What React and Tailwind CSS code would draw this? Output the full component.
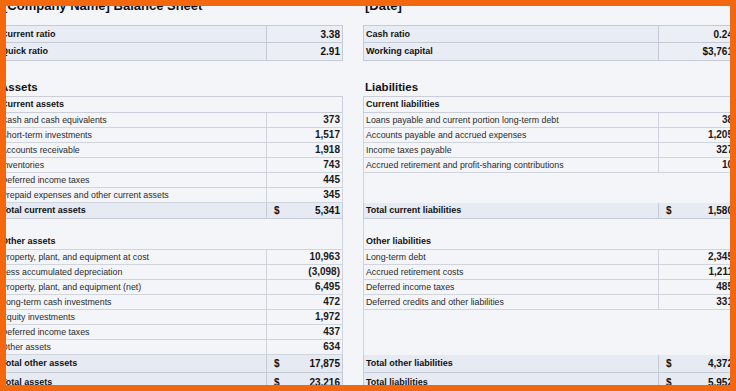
const font = { fontFamily: '"Liberation Sans", Arial, sans-serif' };

const leftData = [
    ["Cash and cash equivalents", "373"],
    ["Short-term investments", "1,517"],
    ["Accounts receivable", "1,918"],
    ["Inventories", "743"],
    ["Deferred income taxes", "445"],
    ["Prepaid expenses and other current assets", "345"],
];

const rightData = [
    ["Loans payable and current portion long-term debt", "38"],
    ["Accounts payable and accrued expenses", "1,205"],
    ["Income taxes payable", "327"],
    ["Accrued retirement and profit-sharing contributions", "10"],
    null,
    null,
];

const leftOther = [
    ["Property, plant, and equipment at cost", "10,963"],
    ["Less accumulated depreciation", "(3,098)"],
    ["Property, plant, and equipment (net)", "6,495"],
    ["Long-term cash investments", "472"],
    ["Equity investments", "1,972"],
    ["Deferred income taxes", "437"],
    ["Other assets", "634"],
];

const rightOther = [
    ["Long-term debt", "2,345"],
    ["Accrued retirement costs", "1,211"],
    ["Deferred income taxes", "485"],
    ["Deferred credits and other liabilities", "331"],
    null,
    null,
    null,
];

// one horizontal band across both tables
function Row({ h, left, right }) {
    return (
        <div className={`flex ${h}`}>
            <div className="flex w-[344px] shrink-0">{left}</div>
            <div className="w-[20px] shrink-0" />
            <div className="flex w-[376px] shrink-0">{right}</div>
        </div>
    );
}

function DataLeft({ label, value }) {
    return (
        <>
            <div className="w-[267px] shrink-0 border-b border-[#d0d4dc] pl-[2px] text-[8.8px] text-[#2a2a2a] leading-[14px] whitespace-nowrap">{label}</div>
            <div className="w-[77px] shrink-0 border-b border-l border-r border-[#d0d4dc] pr-[2px] text-right text-[10px] font-bold text-[#1a1a1a] leading-[14px]">{value}</div>
        </>
    );
}

function DataRight({ row }) {
    if (!row) {
        return <div className="w-[376px] shrink-0 border-l border-[#d0d4dc]" />;
    }
    return (
        <>
            <div className="w-[295px] shrink-0 border-b border-l border-[#d0d4dc] pl-[2px] text-[8.8px] text-[#2a2a2a] leading-[14px] whitespace-nowrap">{row[0]}</div>
            <div className="w-[81px] shrink-0 border-b border-l border-[#d0d4dc] pr-[6px] text-right text-[10px] font-bold text-[#1a1a1a] leading-[14px]">{row[1]}</div>
        </>
    );
}

function TotalLeft({ label, value, lh }) {
    return (
        <>
            <div className={`w-[267px] shrink-0 border-b border-[#c6cbd5] bg-[#e6eaf2] pl-[2px] font-bold text-[#111] ${lh}`}>{label}</div>
            <div className={`flex w-[77px] shrink-0 justify-between border-b border-l border-r border-[#c6cbd5] bg-[#e6eaf2] pl-[7px] pr-[2px] text-[10px] font-bold text-[#111] ${lh}`}>
                <span>$</span>
                <span>{value}</span>
            </div>
        </>
    );
}

function TotalRight({ label, value, lh }) {
    return (
        <>
            <div className={`w-[295px] shrink-0 border-b border-l border-[#c6cbd5] bg-[#e6eaf2] pl-[2px] font-bold text-[#111] ${lh}`}>{label}</div>
            <div className={`flex w-[81px] shrink-0 justify-between border-b border-l border-[#c6cbd5] bg-[#e6eaf2] pl-[7px] pr-[6px] text-[10px] font-bold text-[#111] ${lh}`}>
                <span>$</span>
                <span>{value}</span>
            </div>
        </>
    );
}

export default function App() {
    return (
        <div className="h-[391px] w-[736px] border-[6px] border-[#f3680f] bg-[#f4f5f9]" style={font}>
            <div className="h-full w-full overflow-hidden">
                <div className="-ml-[7px] -mt-[8px] w-[744px] text-[9px]">
                    {/* Title */}
                    <Row
                        h="h-[27px]"
                        left={<div className="pl-[4px] pt-[1px] text-[13px] font-bold leading-[13px] text-[#111] whitespace-nowrap">[Company Name] Balance Sheet</div>}
                        right={<div className="pl-[2px] pt-[1px] text-[13px] font-bold leading-[13px] text-[#111]">[Date]</div>}
                    />

                    {/* Ratios */}
                    {[
                        ["Current ratio", "3.38", "Cash ratio", "0.24", "border-t"],
                        ["Quick ratio", "2.91", "Working capital", "$3,761", ""],
                    ].map(([a, b, c, d, t]) => (
                        <Row
                            key={a}
                            h="h-[18px]"
                            left={
                                <>
                                    <div className={`w-[267px] shrink-0 border-b ${t} border-[#c5cad4] bg-[#e8ecf4] pl-[2px] font-bold leading-[17px] text-[#111]`}>{a}</div>
                                    <div className={`w-[77px] shrink-0 border-b border-l border-r ${t} border-[#c5cad4] bg-[#ebeef4] pr-[2px] text-right text-[10px] font-bold leading-[17px] text-[#111]`}>{b}</div>
                                </>
                            }
                            right={
                                <>
                                    <div className={`w-[295px] shrink-0 border-b border-l ${t} border-[#c5cad4] bg-[#e8ecf4] pl-[2px] font-bold leading-[17px] text-[#111]`}>{c}</div>
                                    <div className={`w-[81px] shrink-0 border-b border-l ${t} border-[#c5cad4] bg-[#ebeef4] pr-[6px] text-right text-[10px] font-bold leading-[17px] text-[#111]`}>{d}</div>
                                </>
                            }
                        />
                    ))}

                    {/* Headings */}
                    <Row
                        h="h-[35px]"
                        left={<div className="flex items-end pb-[2px] pl-[1px] text-[11.5px] font-bold leading-[13px] text-[#111]">Assets</div>}
                        right={<div className="flex items-end pb-[2px] pl-[2px] text-[11.5px] font-bold leading-[13px] text-[#111]">Liabilities</div>}
                    />

                    <Row
                        h="h-[17px]"
                        left={<div className="w-[344px] border-b border-r border-t border-[#c9ced8] pl-[2px] font-bold leading-[15px] text-[#111]">Current assets</div>}
                        right={<div className="w-[376px] border-b border-l border-t border-[#c9ced8] pl-[2px] font-bold leading-[15px] text-[#111]">Current liabilities</div>}
                    />

                    {leftData.map((r, i) => (
                        <Row key={r[0]} h="h-[15px]" left={<DataLeft label={r[0]} value={r[1]} />} right={<DataRight row={rightData[i]} />} />
                    ))}

                    <Row
                        h="h-[16px]"
                        left={<TotalLeft label="Total current assets" value="5,341" lh="leading-[15px]" />}
                        right={<TotalRight label="Total current liabilities" value="1,580" lh="leading-[15px]" />}
                    />

                    <Row
                        h="h-[15px]"
                        left={<div className="w-[344px] border-r border-[#d0d4dc]" />}
                        right={<div className="w-[376px] border-l border-[#d0d4dc]" />}
                    />

                    <Row
                        h="h-[16px]"
                        left={<div className="w-[344px] border-b border-r border-[#d0d4dc] pl-[2px] font-bold leading-[15px] text-[#111]">Other assets</div>}
                        right={<div className="w-[376px] border-b border-l border-[#d0d4dc] pl-[2px] font-bold leading-[15px] text-[#111]">Other liabilities</div>}
                    />

                    {leftOther.map((r, i) => (
                        <Row key={r[0] + i} h="h-[15px]" left={<DataLeft label={r[0]} value={r[1]} />} right={<DataRight row={rightOther[i]} />} />
                    ))}

                    <Row
                        h="h-[18px]"
                        left={<TotalLeft label="Total other assets" value="17,875" lh="leading-[17px]" />}
                        right={<TotalRight label="Total other liabilities" value="4,372" lh="leading-[17px]" />}
                    />
                    <Row
                        h="h-[20px]"
                        left={<TotalLeft label="Total assets" value="23,216" lh="leading-[19px]" />}
                        right={<TotalRight label="Total liabilities" value="5,952" lh="leading-[19px]" />}
                    />
                </div>
            </div>
        </div>
    );
}
